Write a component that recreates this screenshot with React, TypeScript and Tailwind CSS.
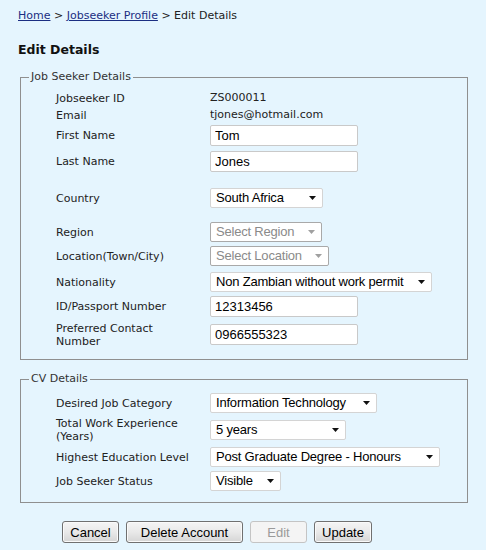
import React from "react"

const verdana = "font-['DejaVu_Sans',Verdana,sans-serif]"
const arial = "font-['Liberation_Sans',Arial,sans-serif]"

function Row({ label, className, children }: { label: React.ReactNode; className: string; children: React.ReactNode }) {
  return (
    <div className={`flex items-center ${className}`}>
      <div className="w-[154px] shrink-0 text-[11px] leading-[13px] text-[#222]">{label}</div>
      <div className="flex items-center">{children}</div>
    </div>
  )
}

function TextBox({ value }: { value: string }) {
  return (
    <input
      readOnly
      value={value}
      className={`${arial} h-[21px] w-[148px] rounded-[2px] border border-[#c9c9c9] bg-white px-[4px] text-[13px] text-black outline-none`}
    />
  )
}

function Arrow({ muted }: { muted?: boolean }) {
  return (
    <svg width="7" height="4" viewBox="0 0 7 4" className="shrink-0">
      <path d="M0 0h7L3.5 4z" fill={muted ? "#a0a0a0" : "#111"} />
    </svg>
  )
}

function Select({ value, w, disabled }: { value: string; w: string; disabled?: boolean }) {
  return (
    <div
      className={`${arial} ${w} flex h-[20px] items-center justify-between rounded-[2px] border bg-white pl-[5px] pr-[6px] text-[13px] tracking-[-0.2px] ${
        disabled ? "border-[#a9a9a9] text-[#8a8a8a]" : "border-[#d4d4d4] text-black"
      }`}
    >
      <span className="whitespace-nowrap">{value}</span>
      <Arrow muted={disabled} />
    </div>
  )
}

function Btn({ children, w, disabled }: { children: React.ReactNode; w: string; disabled?: boolean }) {
  return (
    <button
      disabled={disabled}
      className={`${arial} ${w} h-[22px] rounded-[3px] border text-[13px] leading-none ${
        disabled
          ? "border-[#c4c4c4] bg-[#f4f4f4] text-[#9a9a9a]"
          : "border-[#707070] bg-linear-to-b from-[#f5f5f5] via-[#e9e9e9] to-[#d5d5d5] text-black shadow-[inset_0_0_0_1px_#fafafa]"
      }`}
    >
      {children}
    </button>
  )
}

export default function App() {
  return (
    <div className={`${verdana} min-h-[550px] w-full bg-[#e5f5fe] px-[18px] pt-[8px] text-[#222]`}>
      <div className="text-[11px] leading-[16px]">
        <a href="#" className="text-[#1b2e82] underline">Home</a>
        <span> &gt; </span>
        <a href="#" className="text-[#1b2e82] underline">Jobseeker Profile</a>
        <span> &gt; Edit Details</span>
      </div>

      <h1 className="mt-[18px] text-[12.5px] font-bold leading-[16px] text-[#111]">Edit Details</h1>

      <fieldset className="ml-[2px] mt-[12px] w-[448px] border border-[#8f8f8f] pb-[14px]">
        <legend className="ml-[8px] px-[2px] text-[11px] leading-[14px] text-[#333]">Job Seeker Details</legend>

        <div className="pl-[35px]">
          <Row label="Jobseeker ID" className="mt-[6px] h-[17px]">
            <span className="text-[11px]">ZS000011</span>
          </Row>
          <Row label="Email" className="h-[17px]">
            <span className="text-[11px]">tjones@hotmail.com</span>
          </Row>
          <Row label="First Name" className="mt-[1px] h-[21px]">
            <TextBox value="Tom" />
          </Row>
          <Row label="Last Name" className="mt-[5px] h-[21px]">
            <TextBox value="Jones" />
          </Row>
          <Row label="Country" className="mt-[16px] h-[20px]">
            <Select value="South Africa" w="w-[113px]" />
          </Row>
          <Row label="Region" className="mt-[14px] h-[20px]">
            <Select value="Select Region" w="w-[112px]" disabled />
          </Row>
          <Row label="Location(Town/City)" className="mt-[4px] h-[20px]">
            <Select value="Select Location" w="w-[119px]" disabled />
          </Row>
          <Row label="Nationality" className="mt-[6px] h-[20px]">
            <Select value="Non Zambian without work permit" w="w-[222px]" />
          </Row>
          <Row label="ID/Passport Number" className="mt-[4px] h-[21px]">
            <TextBox value="12313456" />
          </Row>
          <Row
            label={
              <>
                Preferred Contact
                <br />
                Number
              </>
            }
            className="mt-[7px] h-[21px]"
          >
            <TextBox value="0966555323" />
          </Row>
        </div>
      </fieldset>

      <fieldset className="ml-[2px] mt-[12px] w-[448px] border border-[#8f8f8f] pb-[11px]">
        <legend className="ml-[8px] px-[2px] text-[11px] leading-[14px] text-[#333]">CV Details</legend>

        <div className="pl-[35px]">
          <Row label="Desired Job Category" className="mt-[7px] h-[20px]">
            <Select value="Information Technology" w="w-[167px]" />
          </Row>
          <Row
            label={
              <>
                Total Work Experience
                <br />
                (Years)
              </>
            }
            className="mt-[7px] h-[20px]"
          >
            <Select value="5 years" w="w-[136px]" />
          </Row>
          <Row label="Highest Education Level" className="mt-[7px] h-[20px]">
            <Select value="Post Graduate Degree - Honours" w="w-[230px]" />
          </Row>
          <Row label="Job Seeker Status" className="mt-[4px] h-[20px]">
            <Select value="Visible" w="w-[71px]" />
          </Row>
        </div>
      </fieldset>

      <div className="ml-[44px] mt-[18px] flex gap-[7px]">
        <Btn w="w-[57px]">Cancel</Btn>
        <Btn w="w-[117px]">Delete Account</Btn>
        <Btn w="w-[57px]" disabled>Edit</Btn>
        <Btn w="w-[58px]">Update</Btn>
      </div>
    </div>
  )
}
